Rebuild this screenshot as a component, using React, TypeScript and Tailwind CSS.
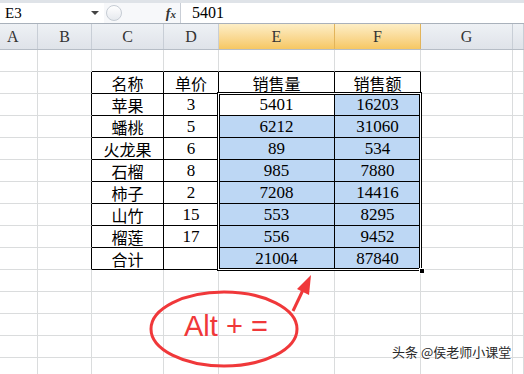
import { ReactNode } from 'react'

const cols = ['A', 'B', 'C', 'D', 'E', 'F', 'G', '']
const selectedCols = ['E', 'F']

// sheet rows 2..10 hold the table, columns C..F
const table: string[][] = [
  ['名称', '单价', '销售量', '销售额'],
  ['苹果', '3', '5401', '16203'],
  ['蟠桃', '5', '6212', '31060'],
  ['火龙果', '6', '89', '534'],
  ['石榴', '8', '985', '7880'],
  ['柿子', '2', '7208', '14416'],
  ['山竹', '15', '553', '8295'],
  ['榴莲', '17', '556', '9452'],
  ['合计', '', '21004', '87840'],
]

const ROWS = 15
const gridCols = 'grid-cols-[38px_54px_72px_55px_116px_86px_92px_11px]'

const Cell = ({ r, c }: { r: number; c: number }) => {
  const inTableRow = r >= 2 && r <= 10
  const blackRight = inTableRow && c >= 1 && c <= 5
  const blackBottom = r >= 1 && r <= 10 && c >= 2 && c <= 5
  const selected = r >= 3 && r <= 10 && c >= 4 && c <= 5 && !(r === 3 && c === 4)
  let content: ReactNode = null
  if (inTableRow && c >= 2 && c <= 5) content = table[r - 2][c - 2]
  const isNum = typeof content === 'string' && /^\d+$/.test(content)

  return (
    <div
      className={[
        'flex items-center justify-center border-r border-b leading-none text-black',
        blackRight ? 'border-r-black' : 'border-r-[#dadcdd]',
        blackBottom ? 'border-b-black' : 'border-b-[#dadcdd]',
        selected ? 'bg-[#bdd7f4]' : 'bg-white',
        isNum
          ? "font-['Liberation_Serif',serif] text-[17px]"
          : "font-['Noto_Sans_CJK_SC',sans-serif] text-[16px]",
      ].join(' ')}
    >
      {content}
    </div>
  )
}

export default function App() {
  return (
    <div className="relative h-[374px] w-[524px] overflow-hidden bg-white">
      {/* formula bar */}
      <div className="flex h-[24px] border-t-[3px] border-b border-t-[#dfe3e8] border-b-[#a9b1bb] bg-white">
        <div className="flex w-[104px] items-center justify-between pl-[5px] pr-[5px] font-['Liberation_Serif',serif] text-[15px] text-black">
          <span>E3</span>
          <span className="h-0 w-0 border-x-[4px] border-t-[4px] border-x-transparent border-t-[#444]" />
        </div>
        <div className="flex w-[77px] items-center justify-between border-r border-r-[#c9ced6] bg-[#f7f8fa] pl-[2px] pr-[4px]">
          <span className="h-[16px] w-[16px] rounded-full border border-[#c6ccd4] bg-gradient-to-b from-white to-[#e6e9ee]" />
          <span className="font-['Liberation_Serif',serif] text-[14px] font-bold italic text-[#333]">
            f<span className="text-[11px]">x</span>
          </span>
        </div>
        <div className="flex items-center pl-[11px] font-['Liberation_Serif',serif] text-[16px] text-black">5401</div>
      </div>

      {/* column headers */}
      <div className={`grid h-[26px] ${gridCols} border-b border-b-[#b6bdc6]`}>
        {cols.map((c, i) => (
          <div
            key={i}
            className={[
              "flex items-center justify-center border-r font-['Liberation_Serif',serif] text-[16px] text-[#333]",
              selectedCols.includes(c)
                ? 'border-r-[#e2b45a] bg-gradient-to-b from-[#fdeec6] to-[#f6c762]'
                : 'border-r-[#c8ced6] bg-gradient-to-b from-[#eef1f5] to-[#dfe3e9]',
              i === 0 ? 'justify-start pl-[7px]' : '',
            ].join(' ')}
          >
            {c}
          </div>
        ))}
      </div>

      {/* sheet */}
      <div className="relative">
        <div className={`grid ${gridCols} auto-rows-[22px]`}>
          {Array.from({ length: ROWS }, (_, ri) =>
            cols.map((_, c) => <Cell key={`${ri}-${c}`} r={ri + 1} c={c} />),
          )}
        </div>
        {/* selection outline over E3:F10 */}
        <div className="pointer-events-none absolute left-[217px] top-[42px] h-[179px] w-[205px] border border-black shadow-[inset_0_0_0_1px_#fff,inset_0_0_0_2px_#000]">
          <span className="absolute -right-[4px] -bottom-[4px] h-[6px] w-[6px] border border-white bg-black" />
        </div>
      </div>

      {/* annotation */}
      <svg className="pointer-events-none absolute inset-0" width="524" height="374" viewBox="0 0 524 374">
        <ellipse cx="224" cy="329" rx="73" ry="37" fill="none" stroke="#f0383a" strokeWidth="3" />
        <line x1="293" y1="311" x2="303" y2="290" stroke="#f0383a" strokeWidth="3" />
        <polygon points="311,275 297,289 309,295" fill="#f0383a" />
      </svg>
      <div className="absolute left-[184px] top-[312px] font-['Liberation_Sans',sans-serif] text-[29px] leading-none whitespace-pre text-[#f0383a]">
        Alt + =
      </div>
      <div className="absolute left-[392px] top-[345px] font-['Noto_Sans_CJK_SC',sans-serif] text-[13px] leading-none text-[#2a2a2a] [text-shadow:0_0_2px_#fff]">
        头条 @侯老师小课堂
      </div>
    </div>
  )
}
